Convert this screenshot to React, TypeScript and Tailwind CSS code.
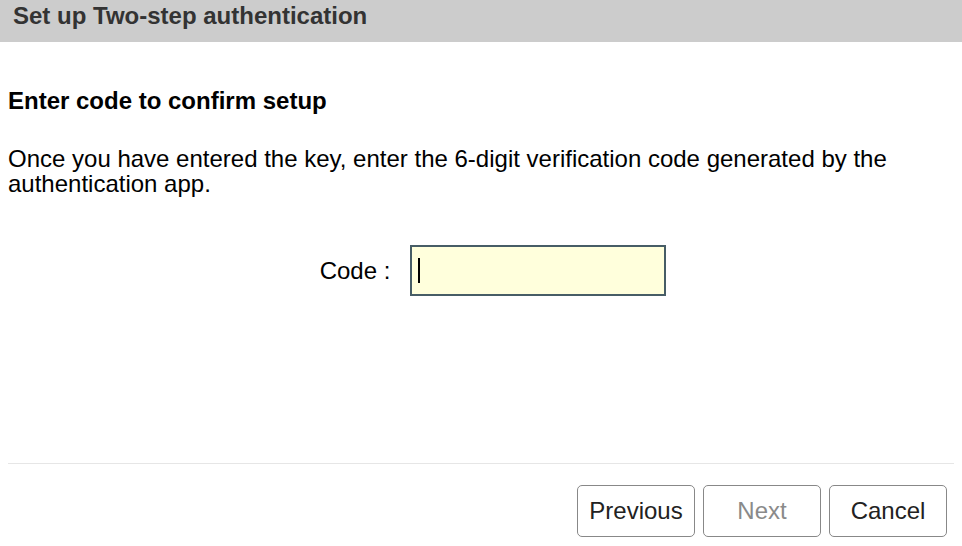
export default function App() {
  return (
    <div className="flex h-[546px] w-[962px] flex-col bg-white font-['Liberation_Sans',Arial,sans-serif] text-black">
      <div className="h-[42px] bg-[#cccccc] px-[13px] pt-[2px]">
        <h1 className="text-[24px] font-bold leading-[28px] text-[#333333]">Set up Two-step authentication</h1>
      </div>

      <div className="flex flex-1 flex-col px-2">
        <h2 className="mt-[45px] text-[24px] font-bold leading-[28px]">Enter code to confirm setup</h2>
        <p className="mt-[31px] text-[24px] leading-[25px]">
          Once you have entered the key, enter the 6-digit verification code generated by the authentication app.
        </p>

        <div className="mt-[49px] flex items-center justify-center gap-5 pl-[24px]">
          <label className="text-[24px]">Code :</label>
          <div className="relative">
            <input
              type="text"
              className="h-[51px] w-[256px] border-2 border-[#475d66] bg-[#ffffdc] px-2 text-[24px] outline-none"
            />
            <span className="pointer-events-none absolute left-[8px] top-[13px] h-[25px] w-[2px] bg-black" />
          </div>
        </div>

        <div className="mt-auto border-t border-[#e6e6e6]" />
        <div className="flex justify-end gap-2 pb-[9px] pr-[7px] pt-[21px]">
          <button className="h-[52px] w-[118px] rounded-[5px] border border-[#888888] bg-white text-[24px] text-[#222]">
            Previous
          </button>
          <button disabled className="h-[52px] w-[118px] rounded-[5px] border border-[#888888] bg-white text-[24px] text-[#8a8a8a]">
            Next
          </button>
          <button className="h-[52px] w-[118px] rounded-[5px] border border-[#888888] bg-white text-[24px] text-[#222]">
            Cancel
          </button>
        </div>
      </div>
    </div>
  );
}
